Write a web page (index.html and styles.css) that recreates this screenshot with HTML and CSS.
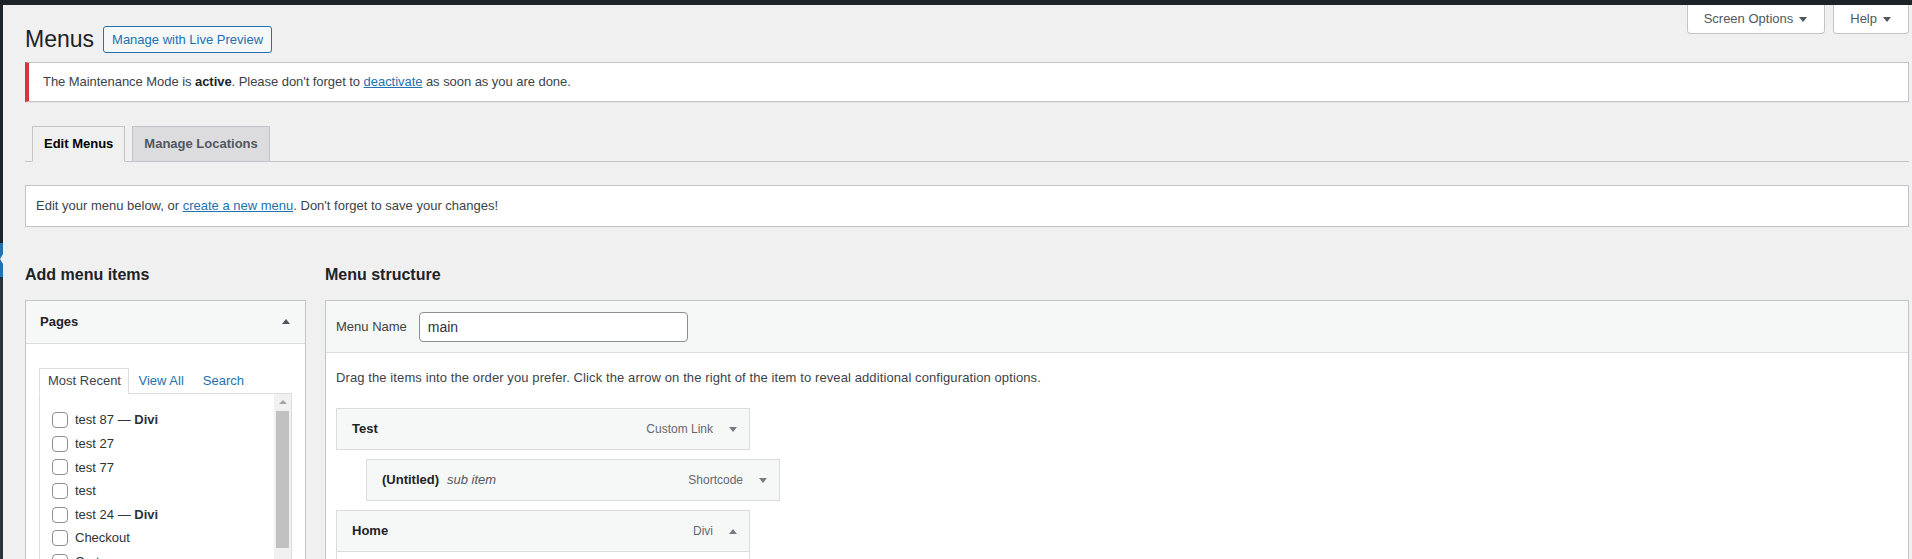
FILE: index.html
```html
<!DOCTYPE html>
<html lang="en">
<head>
<meta charset="utf-8">
<title>Menus</title>
<link rel="stylesheet" href="styles.css">
</head>
<body>
<div class="topbar"></div>
<div class="layout">
  <nav class="adminmenu">
    <span class="menu-top"></span>
    <span class="menu-current"></span>
    <span class="menu-sub"></span>
  </nav>
  <main class="main">
    <div class="page-head">
      <div class="title-row">
        <h1 class="page-title">Menus</h1>
        <a class="title-action" href="#">Manage with Live Preview</a>
      </div>
      <div class="screen-meta">
        <button class="meta-link" type="button">Screen Options<span class="meta-caret"><span class="caret-down"></span></span></button>
        <button class="meta-link" type="button">Help<span class="meta-caret"><span class="caret-down"></span></span></button>
      </div>
    </div>

    <div class="notice">
      <p>The Maintenance Mode is <strong>active</strong>. Please don't forget to <a href="#">deactivate</a> as soon as you are done.</p>
    </div>

    <div class="nav-tabs">
      <a class="nav-tab nav-tab-active" href="#">Edit Menus</a>
      <a class="nav-tab" href="#">Manage Locations</a>
    </div>

    <div class="manage-menus">Edit your menu below, or <a href="#">create a new menu</a>. Don't forget to save your changes!</div>

    <div class="frame">
      <section class="col-left">
        <h2 class="col-title">Add menu items</h2>
        <div class="postbox">
          <div class="postbox-head"><span>Pages</span><span class="caret-up"></span></div>
          <div class="postbox-body">
            <ul class="item-tabs">
              <li class="item-tab item-tab-active">Most Recent</li>
              <li class="item-tab"><a href="#">View All</a></li>
              <li class="item-tab"><a href="#">Search</a></li>
            </ul>
            <div class="tabs-panel">
              <ul class="checklist">
                <li class="check-row"><input class="checkbox" type="checkbox"><span>test 87 — <strong>Divi</strong></span></li>
                <li class="check-row"><input class="checkbox" type="checkbox"><span>test 27</span></li>
                <li class="check-row"><input class="checkbox" type="checkbox"><span>test 77</span></li>
                <li class="check-row"><input class="checkbox" type="checkbox"><span>test</span></li>
                <li class="check-row"><input class="checkbox" type="checkbox"><span>test 24 — <strong>Divi</strong></span></li>
                <li class="check-row"><input class="checkbox" type="checkbox"><span>Checkout</span></li>
                <li class="check-row"><input class="checkbox" type="checkbox"><span>Cart</span></li>
              </ul>
              <div class="scrollbar">
                <div class="sb-btn"><span class="sb-arrow"></span></div>
                <div class="sb-thumb"></div>
              </div>
            </div>
          </div>
        </div>
      </section>

      <section class="col-right">
        <h2 class="col-title">Menu structure</h2>
        <div class="menu-edit">
          <div class="menu-header">
            <label class="menu-name-label" for="menu-name">Menu Name</label>
            <input class="menu-name-input" id="menu-name" type="text" value="main">
          </div>
          <div class="menu-body">
            <p class="drag-text">Drag the items into the order you prefer. Click the arrow on the right of the item to reveal additional configuration options.</p>
            <ul class="menu-items">
              <li class="menu-item">
                <div class="handle">
                  <span class="item-title">Test</span>
                  <span class="item-controls"><span class="item-type">Custom Link</span><span class="caret-down item-caret"></span></span>
                </div>
              </li>
              <li class="menu-item depth-1">
                <div class="handle">
                  <span class="item-title">(Untitled)<em class="sub-label">sub item</em></span>
                  <span class="item-controls"><span class="item-type">Shortcode</span><span class="caret-down item-caret"></span></span>
                </div>
              </li>
              <li class="menu-item">
                <div class="handle">
                  <span class="item-title">Home</span>
                  <span class="item-controls"><span class="item-type">Divi</span><span class="caret-up item-caret"></span></span>
                </div>
                <div class="item-settings"></div>
              </li>
            </ul>
          </div>
        </div>
      </section>
    </div>
  </main>
</div>
</body>
</html>
```

FILE: styles.css
```css
* { box-sizing: border-box; }

html, body {
  margin: 0;
  padding: 0;
  height: 100%;
  overflow: hidden;
}

body {
  background: #f0f0f1;
  color: #3c434a;
  font-family: "Liberation Sans", Arial, sans-serif;
  font-size: 13px;
  line-height: 1.5;
}

a { color: #2271b1; }

.topbar {
  height: 5px;
  background: #1d2327;
}

.layout {
  display: flex;
  height: 554px;
}

/* collapsed admin menu strip */
.adminmenu {
  width: 3px;
  flex: none;
  display: flex;
  flex-direction: column;
  background: #2c3338;
}
.menu-top { height: 238px; background: #1d2327; }
.menu-current { height: 34px; background: #2271b1; position: relative; }
.menu-current::after {
  content: "";
  position: absolute;
  right: 0;
  top: 11px;
  border-right: 3px solid #f0f0f1;
  border-top: 5px solid transparent;
  border-bottom: 5px solid transparent;
}
.menu-sub { flex: 1; background: #2c3338; }

.main {
  flex: 1;
  min-width: 0;
  padding: 0 3px 0 22px;
}

/* header */
.page-head {
  display: flex;
  justify-content: space-between;
  align-items: flex-start;
}
.title-row {
  display: flex;
  align-items: flex-start;
  margin-top: 11px;
}
.page-title {
  margin: 0 5px 0 0;
  padding: 9px 0 4px;
  font-size: 23px;
  font-weight: 400;
  line-height: 29.9px;
  color: #1d2327;
}
.title-action {
  margin: 10px 0 0 4px;
  padding: 4px 8px;
  border: 1px solid #2271b1;
  border-radius: 3px;
  background: #f6f7f7;
  color: #2271b1;
  font-size: 13px;
  line-height: 17px;
  text-decoration: none;
}

.screen-meta {
  display: flex;
  gap: 8px;
}
.meta-link {
  display: flex;
  align-items: center;
  margin: 0;
  padding: 3px 11px 3px 16px;
  border: 1px solid #c3c4c7;
  border-top: none;
  border-radius: 0 0 4px 4px;
  background: #fff;
  color: #50575e;
  font-family: "Liberation Sans", Arial, sans-serif;
  font-size: 13px;
  line-height: 22px;
}
.meta-caret {
  width: 20px;
  display: flex;
  justify-content: center;
  color: #50575e;
}

.caret-down {
  display: inline-block;
  width: 0;
  height: 0;
  border-left: 4px solid transparent;
  border-right: 4px solid transparent;
  border-top: 5px solid currentColor;
}
.caret-up {
  display: inline-block;
  width: 0;
  height: 0;
  border-left: 4px solid transparent;
  border-right: 4px solid transparent;
  border-bottom: 5px solid currentColor;
}

/* notice */
.notice {
  margin-top: 3px;
  padding: 1px 12px;
  background: #fff;
  border: 1px solid #c3c4c7;
  border-left: 4px solid #d63638;
  box-shadow: 0 1px 1px rgba(0, 0, 0, .04);
}
.notice p {
  margin: 6.5px 0;
  padding: 2px;
  line-height: 19.5px;
  letter-spacing: -0.05px;
}
.notice strong { color: #1d2327; }

/* tabs */
.nav-tabs {
  display: flex;
  align-items: flex-start;
  margin-top: 15px;
  padding-top: 9px;
  border-bottom: 1px solid #c3c4c7;
}
.nav-tab {
  margin-left: 7px;
  padding: 5px 11px;
  border: 1px solid #c3c4c7;
  border-bottom: none;
  background: #dcdcde;
  color: #50575e;
  font-size: 13px;
  font-weight: bold;
  line-height: 24px;
  text-decoration: none;
}
.nav-tab-active {
  background: #f0f0f1;
  color: #000;
  border-bottom: 1px solid #f0f0f1;
  margin-bottom: -1px;
}

.manage-menus {
  margin-top: 23px;
  padding: 10px;
  background: #fff;
  border: 1px solid #c3c4c7;
  line-height: 19.5px;
}

/* two columns */
.frame {
  display: flex;
  align-items: flex-start;
  gap: 19px;
  margin-top: 36px;
}
.col-left { width: 281px; flex: none; }
.col-right { flex: 1; min-width: 0; }
.col-title {
  margin: 0 0 13px;
  font-size: 16px;
  font-weight: bold;
  line-height: 24px;
  color: #1d2327;
}

.postbox {
  background: #fff;
  border: 1px solid #c3c4c7;
  height: 400px;
}
.postbox-head {
  display: flex;
  justify-content: space-between;
  align-items: center;
  padding: 10px 15px 11px 14px;
  line-height: 21px;
  background: #f6f7f7;
  border-bottom: 1px solid #dcdcde;
  color: #1d2327;
  font-weight: bold;
}
.postbox-head .caret-up { color: #50575e; }
.postbox-body { padding: 24px 13px 0; }

.item-tabs {
  display: flex;
  align-items: flex-start;
  height: 26px;
  margin: 0;
  padding: 0;
  list-style: none;
}
.item-tab {
  padding: 4px 9.5px;
  line-height: 18px;
}
.item-tab a { text-decoration: none; }
.item-tab-active {
  position: relative;
  padding: 3px 7px 3px 8px;
  border: 1px solid #dcdcde;
  border-bottom-color: #fff;
  background: #fff;
  color: #3c434a;
}

.tabs-panel {
  display: flex;
  height: 200px;
  margin-top: -1px;
  border: 1px solid #dcdcde;
  background: #fff;
}
.checklist {
  flex: 1;
  margin: 0;
  padding: 14.5px 12px 0;
  list-style: none;
}
.check-row {
  display: flex;
  align-items: center;
  gap: 7px;
  height: 23.6px;
  color: #2c3338;
}
.checkbox {
  appearance: none;
  -webkit-appearance: none;
  flex: none;
  width: 16px;
  height: 16px;
  margin: 0;
  border: 1px solid #8c8f94;
  border-radius: 4px;
  background: #fff;
}
.scrollbar {
  width: 17px;
  flex: none;
  display: flex;
  flex-direction: column;
  background: #f1f1f1;
}
.sb-btn {
  height: 17px;
  display: flex;
  align-items: center;
  justify-content: center;
}
.sb-arrow {
  width: 0;
  height: 0;
  border-left: 4px solid transparent;
  border-right: 4px solid transparent;
  border-bottom: 4px solid #a3a3a3;
}
.sb-thumb {
  height: 137px;
  margin: 0 2px;
  background: #c1c1c1;
}

/* menu structure */
.menu-edit {
  background: #fff;
  border: 1px solid #c3c4c7;
  height: 400px;
}
.menu-header {
  display: flex;
  align-items: center;
  gap: 12px;
  padding: 11px 10px 10px;
  background: #f6f7f7;
  border-bottom: 1px solid #dcdcde;
}
.menu-name-label { color: #3c434a; }
.menu-name-input {
  width: 269px;
  height: 30px;
  margin: 0;
  padding: 0 8px;
  border: 1px solid #8c8f94;
  border-radius: 4px;
  background: #fff;
  color: #2c3338;
  font-family: "Liberation Sans", Arial, sans-serif;
  font-size: 14px;
}
.menu-body { padding: 0 10px; }
.drag-text {
  margin: 15px 0 21px;
  line-height: 19.5px;
  letter-spacing: 0.1px;
}
.menu-items {
  display: flex;
  flex-direction: column;
  gap: 9px;
  margin: 0;
  padding: 0;
  list-style: none;
}
.depth-1 { margin-left: 30px; }
.handle {
  display: flex;
  align-items: center;
  justify-content: space-between;
  width: 414px;
  padding: 10px 12px 10px 15px;
  border: 1px solid #dcdcde;
  background: #f6f7f7;
  line-height: 20px;
}
.item-title {
  color: #1d2327;
  font-weight: bold;
}
.sub-label {
  margin-left: 8px;
  color: #50575e;
  font-weight: normal;
}
.item-controls {
  display: flex;
  align-items: center;
}
.item-type {
  color: #646970;
  font-size: 12px;
}
.item-caret {
  margin-left: 16px;
  color: #787c82;
}
.item-settings {
  width: 414px;
  height: 120px;
  border: 1px solid #dcdcde;
  border-top: none;
  background: #fff;
}
```
